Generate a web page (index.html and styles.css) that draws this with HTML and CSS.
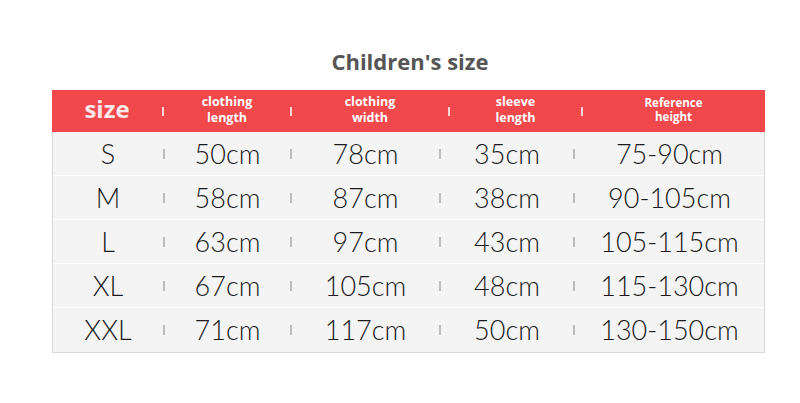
FILE: index.html
```html
<!DOCTYPE html>
<html>
<head>
<meta charset="utf-8">
<link rel="stylesheet" href="styles.css">
</head>
<body>
<div class="page">
  <h1 class="title">Children's size</h1>
  <div class="chart">
    <div class="head">
      <div class="hcell big">size</div><div class="htick"></div>
      <div class="hcell">clothing<br>length</div><div class="htick"></div>
      <div class="hcell">clothing<br>width</div><div class="htick"></div>
      <div class="hcell">sleeve<br>length</div><div class="htick"></div>
      <div class="hcell small">Reference<br>height</div>
    </div>
    <div class="row">
      <div class="cell">S</div><div class="tick"></div>
      <div class="cell">50cm</div><div class="tick"></div>
      <div class="cell">78cm</div><div class="tick"></div>
      <div class="cell">35cm</div><div class="tick"></div>
      <div class="cell">75-90cm</div>
    </div>
    <div class="row">
      <div class="cell">M</div><div class="tick"></div>
      <div class="cell">58cm</div><div class="tick"></div>
      <div class="cell">87cm</div><div class="tick"></div>
      <div class="cell">38cm</div><div class="tick"></div>
      <div class="cell">90-105cm</div>
    </div>
    <div class="row">
      <div class="cell">L</div><div class="tick"></div>
      <div class="cell">63cm</div><div class="tick"></div>
      <div class="cell">97cm</div><div class="tick"></div>
      <div class="cell">43cm</div><div class="tick"></div>
      <div class="cell">105-115cm</div>
    </div>
    <div class="row">
      <div class="cell">XL</div><div class="tick"></div>
      <div class="cell">67cm</div><div class="tick"></div>
      <div class="cell">105cm</div><div class="tick"></div>
      <div class="cell">48cm</div><div class="tick"></div>
      <div class="cell">115-130cm</div>
    </div>
    <div class="row last">
      <div class="cell">XXL</div><div class="tick"></div>
      <div class="cell">71cm</div><div class="tick"></div>
      <div class="cell">117cm</div><div class="tick"></div>
      <div class="cell">50cm</div><div class="tick"></div>
      <div class="cell">130-150cm</div>
    </div>
  </div>
</div>
</body>
</html>
```
FILE: styles.css
```css
html, body {
  margin: 0;
  padding: 0;
  background: #ffffff;
}
.page {
  width: 800px;
  height: 403px;
  padding-top: 45px;
  box-sizing: border-box;
}
.title {
  margin: 0 0 13px 0;
  height: 32px;
  line-height: 32px;
  text-align: center;
  padding-left: 20px;
  font-family: "Open Sans", "Noto Sans", sans-serif;
  font-weight: 700;
  font-size: 22px;
  color: #555555;
}
.chart {
  margin-left: 52px;
  width: 713px;
  border: 1px solid #d9d9d9;
  border-top: none;
  box-sizing: border-box;
  background: #f4f4f4;
}
.head {
  display: grid;
  grid-template-columns: 110px 2px 126px 2px 156px 2px 131px 2px 181px;
  align-items: center;
  height: 42px;
  margin: 0 -1px;
  background: #f0484b;
  color: #ffffff;
  font-family: "Open Sans", "Noto Sans", sans-serif;
  font-weight: 700;
}
.hcell {
  text-align: center;
  font-size: 12.5px;
  line-height: 16px;
  padding-bottom: 2px;
}
.hcell.big {
  font-size: 24px;
  line-height: 30px;
  color: #fde8ea;
  padding-bottom: 4px;
}
.hcell.small {
  font-size: 11.5px;
  line-height: 14px;
}
.htick {
  width: 2px;
  height: 9px;
  background: #fbd5d6;
}
.row {
  display: grid;
  grid-template-columns: 110px 2px 125px 2px 147px 2px 132px 2px 189px;
  align-items: center;
  height: 44px;
  border-bottom: 1px solid #ffffff;
  box-sizing: border-box;
  font-family: "Lato", "Liberation Sans", sans-serif;
  font-weight: 300;
  font-size: 27px;
  color: #1a1a1a;
}
.row.last {
  border-bottom: none;
}
.cell {
  text-align: center;
  line-height: 32px;
}
.tick {
  width: 1.5px;
  height: 10px;
  background: #bdbdbd;
}
```
